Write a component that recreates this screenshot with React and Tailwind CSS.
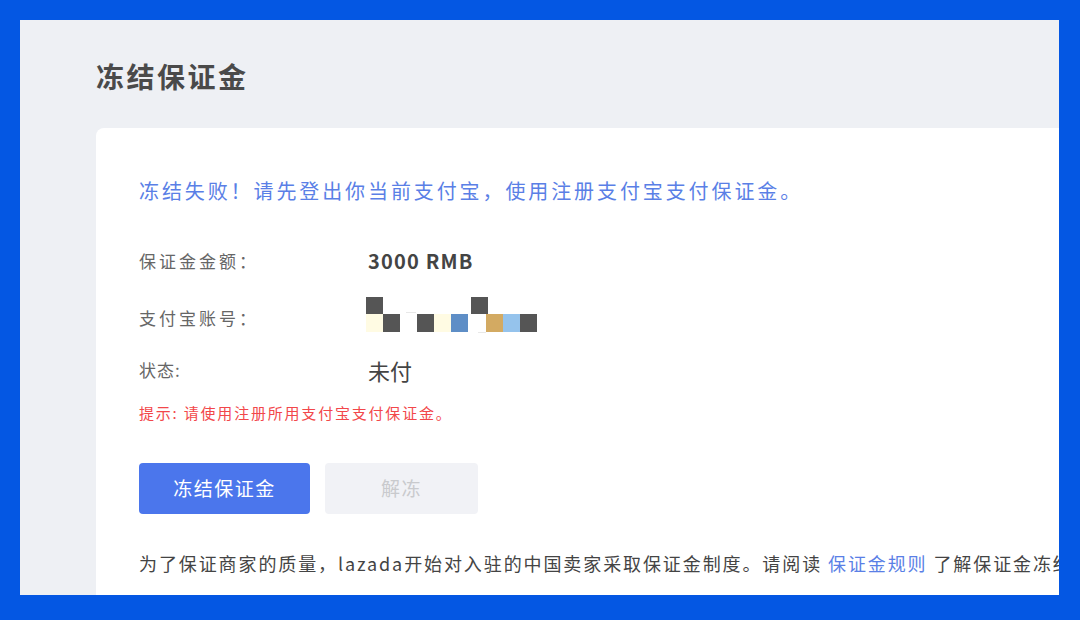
import React from "react";

const font = { fontFamily: '"Noto Sans CJK SC", "Noto Sans", sans-serif' };

const Mosaic = () => (
  <svg width="175" height="36" viewBox="0 0 175 36">
    <rect x="0" y="0" width="17" height="17" fill="#555" />
    <rect x="105" y="0" width="17" height="17" fill="#555" />
    <rect x="0" y="17" width="17" height="18" fill="#fffbe3" />
    <rect x="17" y="17" width="17" height="18" fill="#555" />
    <rect x="51" y="17" width="17" height="18" fill="#555" />
    <rect x="68" y="17" width="17" height="18" fill="#fffbe3" />
    <rect x="85" y="17" width="17" height="18" fill="#5e8ec6" />
    <rect x="120" y="17" width="17" height="18" fill="#d3aa62" />
    <rect x="137" y="17" width="17" height="18" fill="#95c3ec" />
    <rect x="154" y="17" width="17" height="18" fill="#555" />
    <rect x="40" y="15" width="10" height="1" fill="#e8e8e8" />
    <rect x="112" y="35" width="8" height="1" fill="#e8e8e8" />
  </svg>
);

export default function App() {
  return (
    <div
      className="h-[620px] w-[1080px] bg-[#0457e3] pt-[20px] pl-[20px] pr-[21px] pb-[25px]"
      style={font}
    >
      <div className="flex h-full flex-col overflow-hidden bg-[#eef0f4]">
        <div className="pl-[76px] pt-[36px]">
          <h1 className="h-[40px] text-[28px] font-bold leading-[40px] tracking-[2.5px] text-[#4a4a4a]">
            冻结保证金
          </h1>
        </div>
        <div className="ml-[76px] mt-[32px] flex-1 overflow-hidden rounded-tl-[8px] bg-white pl-[43px] pt-[50px]">
          <p className="h-[26px] whitespace-nowrap text-[20px] leading-[26px] tracking-[2.9px] text-[#5a7fe6]">
            冻结失败！请先登出你当前支付宝，使用注册支付宝支付保证金。
          </p>

          <div className="mt-[42px] flex h-[30px] items-center">
            <span className="w-[229px] text-[17px] tracking-[3px] text-[#666]">
              保证金金额：
            </span>
            <span className="text-[20px] font-bold tracking-[1.2px] text-[#444]">
              3000 RMB
            </span>
          </div>

          <div className="mt-[21px] flex h-[36px] items-end">
            <span className="w-[227px] pb-[2px] text-[17px] leading-[26px] tracking-[3px] text-[#666]">
              支付宝账号：
            </span>
            <Mosaic />
          </div>

          <div className="mt-[22px] flex h-[30px] items-center">
            <span className="w-[229px] text-[17px] tracking-[1px] text-[#666]">
              状态:
            </span>
            <span className="text-[22px] text-[#444]">未付</span>
          </div>

          <p className="mt-[17px] h-[22px] whitespace-nowrap text-[15px] leading-[22px] tracking-[1.8px] text-[#f2474a]">
            提示: 请使用注册所用支付宝支付保证金。
          </p>

          <div className="mt-[39px] flex gap-[15px]">
            <button className="h-[51px] w-[171px] rounded-[4px] bg-[#4b76ec] text-[19px] tracking-[1.5px] text-white">
              冻结保证金
            </button>
            <button className="h-[51px] w-[153px] rounded-[4px] bg-[#f1f2f6] text-[19px] tracking-[1.5px] text-[#c9cacd]">
              解冻
            </button>
          </div>

          <p className="mt-[36px] h-[26px] whitespace-nowrap text-[18px] leading-[26px] tracking-[1.9px] text-[#444]">
            为了保证商家的质量，lazada开始对入驻的中国卖家采取保证金制度。请阅读{" "}
            <span className="text-[#5a7fe6]">保证金规则</span> 了解保证金冻结
          </p>
        </div>
      </div>
    </div>
  );
}
